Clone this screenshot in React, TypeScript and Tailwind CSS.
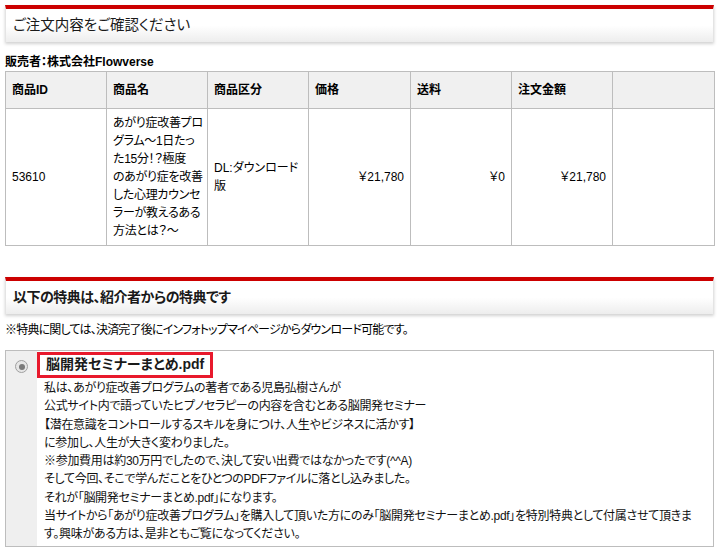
import React from "react";

const font =
  "font-['Liberation_Sans','Noto_Sans_CJK_JP',sans-serif] [font-feature-settings:'palt']";

function SectionTitle({ children, bold }: { children: React.ReactNode; bold?: boolean }) {
  return (
    <div className="border-t-4 border-[#cc0000] bg-gradient-to-b from-white from-50% to-[#ededed] border-x border-x-[#e4e4e4] shadow-[0_2px_3px_rgba(0,0,0,0.18)] h-[37px] flex items-center px-[7px]">
      <h2
        className={`text-[#1a1a1a] ${
          bold ? "font-bold text-[14px] tracking-[-0.5px]" : "font-normal text-[14.5px]"
        }`}
      >
        {children}
      </h2>
    </div>
  );
}

const headers = ["商品ID", "商品名", "商品区分", "価格", "送料", "注文金額", ""];

export default function App() {
  return (
    <div className={`${font} w-[719px] min-h-[552px] bg-white text-black px-[5px] pt-[5px] text-[12px]`}>
      {/* 注文内容 */}
      <SectionTitle>ご注文内容をご確認ください</SectionTitle>

      <p className="mt-[12px] mb-[1px] font-bold text-[12px] leading-[16px]">販売者：株式会社Flowverse</p>

      <table className="w-[709px] table-fixed border-collapse border border-[#bdbdbd]">
        <colgroup>
          <col className="w-[101px]" />
          <col className="w-[101px]" />
          <col className="w-[101px]" />
          <col className="w-[102px]" />
          <col className="w-[101px]" />
          <col className="w-[101px]" />
          <col className="w-[102px]" />
        </colgroup>
        <thead>
          <tr className="h-[37px] bg-[#f0f0f0]">
            {headers.map((h, i) => (
              <th key={i} className="border border-[#bdbdbd] text-left font-bold px-[6px] text-[12px]">
                {h}
              </th>
            ))}
          </tr>
        </thead>
        <tbody>
          <tr className="h-[137px]">
            <td className="border border-[#bdbdbd] px-[6px]">53610</td>
            <td className="border border-[#bdbdbd] px-[6px] py-[5px] leading-[18px] whitespace-nowrap tracking-[-0.3px]">
              あがり症改善プロ
              <br />
              グラム～1日たっ
              <br />
              た15分！？極度
              <br />
              のあがり症を改善
              <br />
              した心理カウンセ
              <br />
              ラーが教えるある
              <br />
              方法とは？～
            </td>
            <td className="border border-[#bdbdbd] px-[6px] leading-[18px]">
              DL:ダウンロード
              <br />
              版
            </td>
            <td className="border border-[#bdbdbd] px-[6px] text-right">￥21,780</td>
            <td className="border border-[#bdbdbd] px-[6px] text-right">￥0</td>
            <td className="border border-[#bdbdbd] px-[6px] text-right">￥21,780</td>
            <td className="border border-[#bdbdbd]"></td>
          </tr>
        </tbody>
      </table>

      {/* 特典 */}
      <div className="mt-[31px]">
        <SectionTitle bold>以下の特典は、紹介者からの特典です</SectionTitle>
      </div>

      <p className="mt-[8px] leading-[16px] tracking-[-0.8px]">
        ※特典に関しては、決済完了後にインフォトップマイページからダウンロード可能です。
      </p>

      <div className="mt-[12px] flex border border-[#bdbdbd] h-[197px]">
        <div className="w-[31px] shrink-0 bg-[#efefef] flex justify-center pt-[9px]">
          <span className="w-[13px] h-[13px] rounded-full border border-[#a0a0a0] bg-[#e6e6e6] flex items-center justify-center">
            <span className="w-[6px] h-[6px] rounded-full bg-[#7a7a7a]" />
          </span>
        </div>
        <div className="flex-1 pt-[1px]">
          <div className="inline-block border-[3px] border-[#e8192c] px-[6px] h-[26px] leading-[19px] text-[14px] font-bold text-[#1a1a1a]">
            脳開発セミナーまとめ.pdf
          </div>
          <div className="pl-[7px] pt-[1px] leading-[18.3px] text-[#111] tracking-[-0.3px]">
            私は、あがり症改善プログラムの著者である児島弘樹さんが
            <br />
            公式サイト内で語っていたヒプノセラピーの内容を含むとある脳開発セミナー
            <br />
            【潜在意識をコントロールするスキルを身につけ、人生やビジネスに活かす】
            <br />
            に参加し、人生が大きく変わりました。
            <br />
            ※参加費用は約30万円でしたので、決して安い出費ではなかったです(^^A)
            <br />
            そして今回、そこで学んだことをひとつのPDFファイルに落とし込みました。
            <br />
            それが「脳開発セミナーまとめ.pdf」になります。
            <br />
            <span className="whitespace-nowrap">
              当サイトから「あがり症改善プログラム」を購入して頂いた方にのみ「脳開発セミナーまとめ.pdf」を特別特典として付属させて頂きま
            </span>
            <br />
            す。興味がある方は、是非ともご覧になってください。
          </div>
        </div>
      </div>
    </div>
  );
}
